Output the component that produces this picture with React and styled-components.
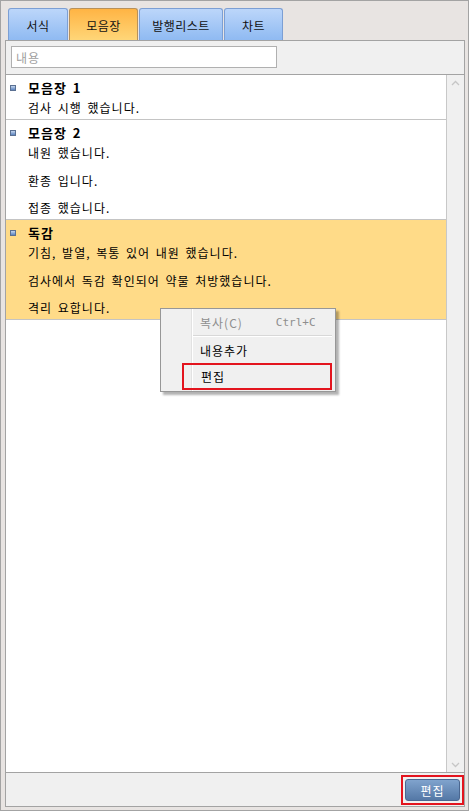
import React from "react";
import styled, { createGlobalStyle } from "styled-components";

const GlobalStyle = createGlobalStyle`
  html, body { margin: 0; padding: 0; background: #ffffff; }
  body { font-family: "Noto Sans CJK KR", "Noto Sans", sans-serif; font-size: 12px; }
  * { box-sizing: border-box; }
`;

const Window = styled.div`
  position: relative;
  width: 469px;
  height: 811px;
  border: 1px solid #a3a3a3;
  background: #e8e4e2;
  display: flex;
  flex-direction: column;
  padding: 7px 3px 3px 4px;
`;

const TabBar = styled.div`
  display: flex;
  gap: 1px;
  padding-left: 3px;
  height: 32px;
`;

const Tab = styled.div`
  width: ${(p) => p.w}px;
  height: 32px;
  border: 1px solid ${(p) => (p.active ? "#b8915a" : "#7c9fd4")};
  border-bottom: none;
  border-radius: 3px 3px 0 0;
  background: ${(p) =>
    p.active
      ? "linear-gradient(#ffb444, #ffd678)"
      : "linear-gradient(#bcd6fa, #8fbaf2)"};
  display: flex;
  align-items: center;
  justify-content: center;
  font-size: 12px;
  letter-spacing: 0.5px;
  color: #111;
  padding-top: 1px;
`;

const Panel = styled.div`
  flex: 1;
  display: flex;
  flex-direction: column;
  border: 1px solid #a3a3a3;
  background: #f0f0f0;
  min-height: 0;
`;

const SearchBar = styled.div`
  height: 34px;
  border-bottom: 1px solid #a3a3a3;
  padding: 5px 0 0 5px;
`;

const SearchInput = styled.input`
  width: 266px;
  height: 22px;
  border: 1px solid #b0b0b0;
  background: #fff;
  font-family: "Noto Sans CJK KR", sans-serif;
  font-size: 12px;
  letter-spacing: 1px;
  padding: 0 4px;
  outline: none;
  &::placeholder { color: #a0a0a0; }
`;

const ListArea = styled.div`
  flex: 1;
  display: flex;
  background: #fff;
  border-bottom: 1px solid #a3a3a3;
  min-height: 0;
`;

const List = styled.div`
  flex: 1;
  display: flex;
  flex-direction: column;
`;

const Group = styled.div`
  background: ${(p) => (p.selected ? "#ffdb88" : "#fff")};
  border-bottom: 1px solid #c4c4c4;
  padding: 3px 0 2px 4px;
`;

const TitleRow = styled.div`
  display: flex;
  align-items: center;
  height: 18px;
  font-weight: bold;
  font-size: 13px;
  letter-spacing: 1px;
  word-spacing: 2px;
  color: #000;
`;

const Bullet = styled.span`
  width: 6px;
  height: 6px;
  margin: 1px 12px 0 0;
  border: 1px solid #5a7092;
  background: linear-gradient(#c4d6ee, #5b83bf);
`;

const Line = styled.div`
  line-height: 18px;
  height: 18px;
  padding-left: 18px;
  margin-top: ${(p) => p.gap}px;
  color: #000;
  font-size: 12px;
  letter-spacing: 1px;
  word-spacing: 2px;
`;

const ScrollBar = styled.div`
  width: 18px;
  border-left: 1px solid #c8c8c8;
  background: #f0f0f0;
  display: flex;
  flex-direction: column;
  justify-content: space-between;
  align-items: center;
  padding: 5px 0 4px;
`;

const BottomBar = styled.div`
  height: 33px;
  display: flex;
  justify-content: flex-end;
  align-items: center;
  padding: 1px 0 0 0;
`;

const RedBox = styled.div`
  border: 2px solid #e3141e;
  padding: 2px;
  display: flex;
`;

const Button = styled.button`
  width: 55px;
  height: 22px;
  border: 1px solid #4a6690;
  border-radius: 3px;
  background: linear-gradient(#80a3cd, #5478a6);
  color: #fff;
  font-family: "Noto Sans CJK KR", sans-serif;
  font-size: 12px;
  letter-spacing: 1px;
  padding: 0;
`;

const Menu = styled.div`
  position: absolute;
  left: 159px;
  top: 307px;
  width: 176px;
  border: 1px solid #979797;
  background: #f0f0f0;
  box-shadow: 3px 3px 2px rgba(0, 0, 0, 0.3);
  padding: 1px 1px 1px 0;
  background-image: linear-gradient(
    to right,
    transparent 30px,
    #e2e2e2 30px,
    #e2e2e2 31px,
    #ffffff 31px,
    #ffffff 32px,
    transparent 32px
  );
`;

const MenuItem = styled.div`
  display: flex;
  align-items: center;
  height: ${(p) => (p.boxed ? 27 : 25)}px;
  padding-left: ${(p) => (p.boxed ? 17 : 39)}px;
  margin-left: ${(p) => (p.boxed ? 21 : 0)}px;
  margin-right: ${(p) => (p.boxed ? 2 : 0)}px;
  border: ${(p) => (p.boxed ? "2px solid #e3141e" : "none")};
  color: ${(p) => (p.disabled ? "#8e8e8e" : "#000")};
  font-size: 12px;
  letter-spacing: 1px;
`;

const Shortcut = styled.span`
  margin-left: 33px;
  font-family: "DejaVu Sans Mono", monospace;
  font-size: 11px;
  letter-spacing: 0;
`;

const MenuSep = styled.div`
  height: 1px;
  margin: 0 2px 1px 32px;
  background: #d8d8d8;
  border-bottom: 1px solid #fff;
  box-sizing: content-box;
`;

const Chevron = ({ down }) => (
  <svg width="9" height="6" viewBox="0 0 9 6">
    <path
      d={down ? "M1 1 L4.5 4.5 L8 1" : "M1 5 L4.5 1.5 L8 5"}
      fill="none"
      stroke="#c6c6c6"
      strokeWidth="1.3"
    />
  </svg>
);

const tabs = [
  { label: "서식", w: 60 },
  { label: "모음장", w: 69, active: true },
  { label: "발행리스트", w: 84 },
  { label: "차트", w: 59 },
];

const groups = [
  { title: "모음장 1", lines: ["검사 시행 했습니다."] },
  { title: "모음장 2", lines: ["내원 했습니다.", "환종 입니다.", "접종 했습니다."] },
  {
    title: "독감",
    selected: true,
    lines: [
      "기침, 발열, 복통 있어 내원 했습니다.",
      "검사에서 독감 확인되어 약물 처방했습니다.",
      "격리 요합니다.",
    ],
  },
];

const gaps = [3, 10, 9];

export default function App() {
  return (
    <>
      <GlobalStyle />
      <Window>
        <TabBar>
          {tabs.map((t) => (
            <Tab key={t.label} w={t.w} active={t.active}>
              {t.label}
            </Tab>
          ))}
        </TabBar>
        <Panel>
          <SearchBar>
            <SearchInput placeholder="내용" />
          </SearchBar>
          <ListArea>
            <List>
              {groups.map((g) => (
                <Group key={g.title} selected={g.selected}>
                  <TitleRow>
                    <Bullet />
                    {g.title}
                  </TitleRow>
                  {g.lines.map((l, i) => (
                    <Line key={l} gap={gaps[i]}>
                      {l}
                    </Line>
                  ))}
                </Group>
              ))}
            </List>
            <ScrollBar>
              <Chevron />
              <Chevron down />
            </ScrollBar>
          </ListArea>
          <BottomBar>
            <RedBox>
              <Button>편집</Button>
            </RedBox>
          </BottomBar>
        </Panel>
        <Menu>
          <MenuItem disabled>
            복사(C)
            <Shortcut>Ctrl+C</Shortcut>
          </MenuItem>
          <MenuSep />
          <MenuItem>내용추가</MenuItem>
          <MenuItem boxed>편집</MenuItem>
        </Menu>
      </Window>
    </>
  );
}
